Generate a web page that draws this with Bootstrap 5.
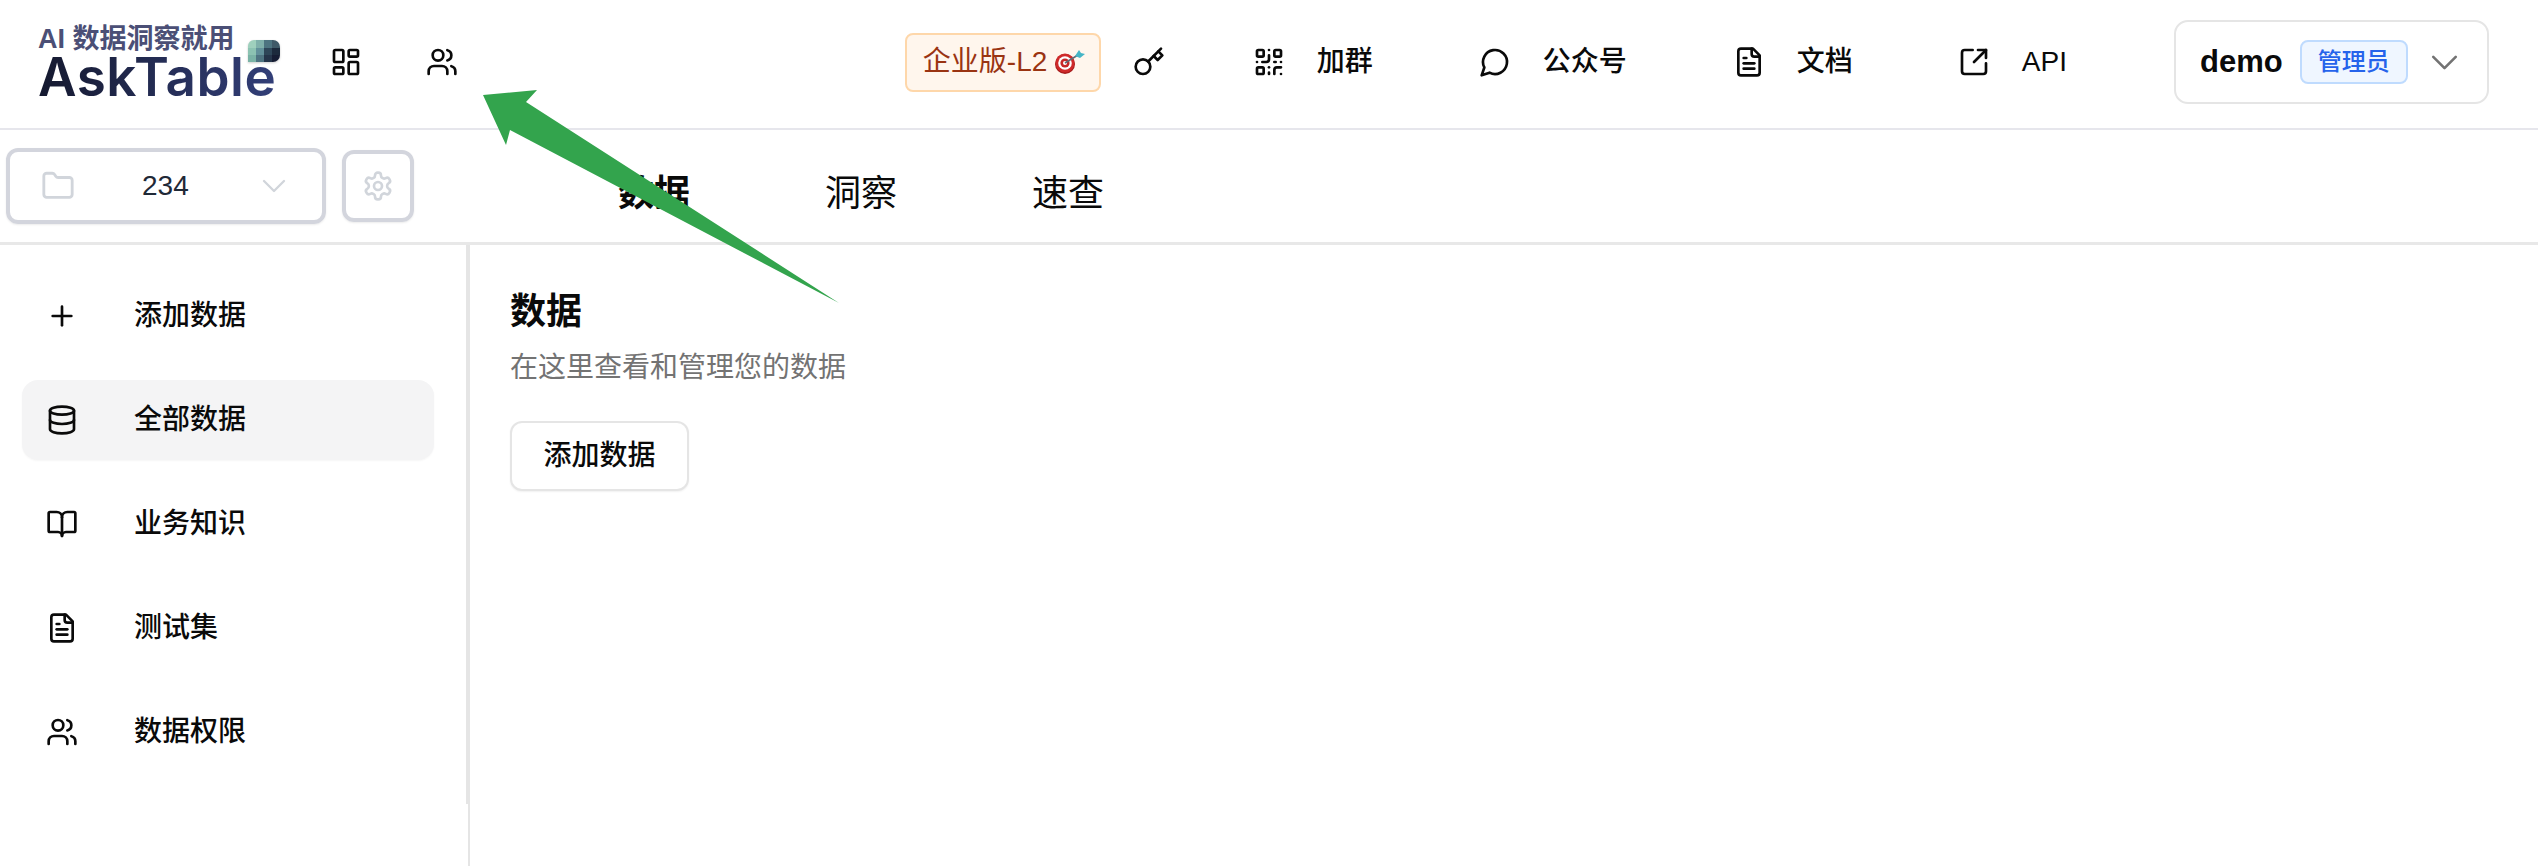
<!DOCTYPE html>
<html lang="zh-CN">
<head>
  <meta charset="UTF-8">
  <meta name="viewport" content="width=device-width, initial-scale=1.0">
  <title>AskTable</title>
  <link rel="stylesheet" href="https://cdn.jsdelivr.net/npm/bootstrap@5.3.0/dist/css/bootstrap.min.css">
  <style>
    html, body { height: 866px; overflow: hidden; }
    body { font-family: "Liberation Sans", "Noto Sans CJK SC", sans-serif; color: #0a0a0a; background: #fff; position: relative; }
    svg.ico { fill: none; stroke: currentColor; stroke-width: 2; stroke-linecap: round; stroke-linejoin: round; flex: none; }
    .top-bar { height: 130px; border-bottom: 2px solid #e6e6ec; padding: 0 49px 4px 0; }
    .brand-box { width: 250px; margin-left: 38px; padding-top: 24px; position: relative; flex: none; }
    .brand-slogan { font-size: 27px; line-height: 30px; font-weight: 700; color: #4b4f76; white-space: nowrap; }
    .brand-name { font-family: Inter, sans-serif; font-size: 53px; line-height: 46px; font-weight: 600; white-space: nowrap; letter-spacing: .5px;
      background: linear-gradient(90deg, #15192f, #34417c); -webkit-background-clip: text; background-clip: text; color: transparent; }
    .brand-mark { position: absolute; left: 210px; top: 40px; filter: drop-shadow(0 1px 1px rgba(0,0,0,.2)); }
    .top-ico-left { margin-left: 42px; gap: 64px; }
    .plan-tag { width: 196px; height: 59px; margin-left: auto; background: #fff6ed; border: 2px solid #fed7aa; border-radius: 8px; color: #9a3412; font-size: 28px; padding-left: 16px; white-space: nowrap; flex: none; }
    .act-item { font-size: 28px; font-weight: 500; color: #0a0a0a; white-space: nowrap; flex: none; margin-left: 32px; }
    .ico-key { margin-left: 32px; }
    .ico-qr { margin-left: 88px; }
    .ico-next { margin-left: 106px; }
    .ico-link { margin-left: 105px; }
    .user-box { width: 315px; height: 84px; margin-left: 107px; border: 2px solid #e5e5e5; border-radius: 14px; padding-left: 24px; flex: none; }
    .user-name { font-size: 31px; font-weight: 700; }
    .role-tag { width: 108px; height: 44px; margin-left: 17px; background: #eff6ff; border: 2px solid #bfdbfe; border-radius: 8px; color: #2563eb; font-size: 24px; font-weight: 500; }
    .user-chev { margin-left: 14px; color: #737373; }
    .user-chev, .ds-chev { stroke-width: 1.4 !important; }
    .sub-bar { height: 115px; border-bottom: 3px solid #e8e8e8; }
    .ds-select { width: 320px; height: 76px; margin-left: 6px; padding-left: 31px; border: 4px solid #d3d5dd; border-radius: 12px; color: #d1d5db; box-shadow: 0 1px 2px rgba(0,0,0,.08); }
    .ds-name { font-size: 28px; color: #1f2937; margin-left: 67px; }
    .ds-chev { margin-left: 65px; }
    .gear-btn { width: 72px; height: 72px; margin-left: 16px; border: 4px solid #d3d5dd; border-radius: 12px; color: #d1d5db; box-shadow: 0 1px 2px rgba(0,0,0,.08); }
    .tab-row { margin-left: 204px; gap: 135px; font-size: 36px; color: #0a0a0a; }
    .page-body { height: 621px; }
    .side-wrap { width: 470px; border-right: 2px solid #e5e5e5; }
    .side-nav { height: 559px; border-right: 2px solid #e5e5e5; padding: 31px 32px 0 22px; }
    .side-link { height: 80px; margin-bottom: 24px; padding-left: 24px; gap: 56px; border-radius: 16px; font-size: 28px; font-weight: 500; color: #0a0a0a; }
    .side-link.is-on { background: #f4f4f5; box-shadow: 0 1px 2px rgba(0,0,0,.04); }
    .main-pane { padding: 43px 0 0 40px; }
    .pane-title { font-size: 36px; line-height: 48px; font-weight: 700; margin: 0; }
    .pane-sub { font-size: 28px; line-height: 40px; color: #737373; margin: 12px 0 33px; }
    .add-btn { width: 179px; height: 70px; background: #fff; border: 2px solid #e5e5e5; border-radius: 12px; font-size: 28px; font-weight: 500; padding: 0; color: #0a0a0a; box-shadow: 0 1px 2px rgba(0,0,0,.06); }
    .note-arrow { position: absolute; left: 0; top: 0; pointer-events: none; }
  </style>
</head>
<body>
<header class="top-bar d-flex align-items-center">
  <div class="brand-box align-self-start">
    <div class="brand-slogan">AI 数据洞察就用</div>
    <div class="brand-name">AskTable</div>
    <svg class="brand-mark" width="32" height="23" viewBox="0 0 32 23">
      <defs><clipPath id="markClip"><path d="M6 0H25A7 7 0 0 1 32 7V15A7 7 0 0 1 25 22H0V6A6 6 0 0 1 6 0Z"/></clipPath></defs>
      <g clip-path="url(#markClip)">
        <rect width="8" height="8" fill="#9fd0bd"/><rect x="8" width="8" height="8" fill="#7fb0aa"/><rect x="16" width="8" height="8" fill="#4d7480"/><rect x="24" width="8" height="8" fill="#3f5a68"/>
        <rect y="8" width="8" height="7" fill="#8cc3b2"/><rect x="8" y="8" width="8" height="7" fill="#62919a"/><rect x="16" y="8" width="8" height="7" fill="#2e4658"/><rect x="24" y="8" width="8" height="7" fill="#1c2a3c"/>
        <rect y="15" width="8" height="7" fill="#7ab3a6"/><rect x="8" y="15" width="8" height="7" fill="#4e7481"/><rect x="16" y="15" width="8" height="7" fill="#25354a"/><rect x="24" y="15" width="8" height="7" fill="#161d33"/>
      </g>
    </svg>
  </div>
  <div class="top-ico-left d-flex align-items-center">
    <svg class="ico" width="32" height="32" viewBox="0 0 24 24"><rect x="3" y="3" width="7" height="9" rx="1"/><rect x="14" y="3" width="7" height="5" rx="1"/><rect x="14" y="12" width="7" height="9" rx="1"/><rect x="3" y="16" width="7" height="5" rx="1"/></svg>
    <svg class="ico" width="32" height="32" viewBox="0 0 24 24"><path d="M16 21v-2a4 4 0 0 0-4-4H6a4 4 0 0 0-4 4v2"/><circle cx="9" cy="7" r="4"/><path d="M22 21v-2a4 4 0 0 0-3-3.87"/><path d="M16 3.13a4 4 0 0 1 0 7.75"/></svg>
  </div>
  <div class="plan-tag d-flex align-items-center">企业版-L2
    <svg class="ms-2" width="30" height="26" viewBox="0 0 30 26">
      <circle cx="10" cy="15" r="10" fill="#a61b1b"/><circle cx="10" cy="14" r="9.5" fill="#cf2a2a"/><circle cx="10" cy="14" r="6.8" fill="#fff"/><circle cx="10" cy="14" r="4.6" fill="#c62828"/><circle cx="10" cy="14" r="2" fill="#fff"/>
      <path d="M10 14 23 6" stroke="#5f6b76" stroke-width="1.6"/><path d="M20 7 24 1 26 4 30 5 25 9Z" fill="#45b5c6"/>
    </svg>
  </div>
  <svg class="ico ico-key" width="32" height="32" viewBox="0 0 24 24"><circle cx="7.5" cy="15.5" r="5.5"/><path d="m21 2-9.6 9.6"/><path d="m15.5 7.5 3 3L22 7l-3-3"/></svg>
  <svg class="ico ico-qr" width="32" height="32" viewBox="0 0 24 24"><rect x="3" y="3" width="5" height="5" rx="1"/><rect x="16" y="3" width="5" height="5" rx="1"/><rect x="3" y="16" width="5" height="5" rx="1"/><path d="M21 16h-3a2 2 0 0 0-2 2v3"/><path d="M21 21v.01"/><path d="M12 7v3a2 2 0 0 1-2 2H7"/><path d="M3 12h.01"/><path d="M12 3h.01"/><path d="M12 16v.01"/><path d="M16 12h1"/><path d="M21 12v.01"/><path d="M12 21v-1"/></svg>
  <span class="act-item">加群</span>
  <svg class="ico ico-next" width="32" height="32" viewBox="0 0 24 24"><path d="M7.9 20A9 9 0 1 0 4 16.1L2 22Z"/></svg>
  <span class="act-item">公众号</span>
  <svg class="ico ico-next" width="32" height="32" viewBox="0 0 24 24"><path d="M15 2H6a2 2 0 0 0-2 2v16a2 2 0 0 0 2 2h12a2 2 0 0 0 2-2V7Z"/><path d="M14 2v4a2 2 0 0 0 2 2h4"/><path d="M10 9H8"/><path d="M16 13H8"/><path d="M16 17H8"/></svg>
  <span class="act-item">文档</span>
  <svg class="ico ico-link" width="32" height="32" viewBox="0 0 24 24"><path d="M21 13v6a2 2 0 0 1-2 2H5a2 2 0 0 1-2-2V5a2 2 0 0 1 2-2h6"/><path d="m21 3-9 9"/><path d="M15 3h6v6"/></svg>
  <span class="act-item">API</span>
  <div class="user-box d-flex align-items-center">
    <span class="user-name">demo</span>
    <span class="role-tag d-flex align-items-center justify-content-center">管理员</span>
    <svg class="ico user-chev" width="45" height="45" viewBox="0 0 24 24"><path d="m6 9 6 6 6-6"/></svg>
  </div>
</header>

<div class="sub-bar d-flex align-items-center">
  <div class="ds-select d-flex align-items-center">
    <svg class="ico" width="34" height="34" viewBox="0 0 24 24"><path d="M20 20a2 2 0 0 0 2-2V8a2 2 0 0 0-2-2h-7.9a2 2 0 0 1-1.69-.9L9.6 3.9A2 2 0 0 0 7.93 3H4a2 2 0 0 0-2 2v13a2 2 0 0 0 2 2Z"/></svg>
    <span class="ds-name">234</span>
    <svg class="ico ds-chev" width="40" height="40" viewBox="0 0 24 24"><path d="m6 9 6 6 6-6"/></svg>
  </div>
  <div class="gear-btn d-flex align-items-center justify-content-center">
    <svg class="ico" width="32" height="32" viewBox="0 0 24 24"><path d="M12.22 2h-.44a2 2 0 0 0-2 2v.18a2 2 0 0 1-1 1.73l-.43.25a2 2 0 0 1-2 0l-.15-.08a2 2 0 0 0-2.73.73l-.22.38a2 2 0 0 0 .73 2.73l.15.1a2 2 0 0 1 1 1.72v.51a2 2 0 0 1-1 1.74l-.15.09a2 2 0 0 0-.73 2.73l.22.38a2 2 0 0 0 2.73.73l.15-.08a2 2 0 0 1 2 0l.43.25a2 2 0 0 1 1 1.73V20a2 2 0 0 0 2 2h.44a2 2 0 0 0 2-2v-.18a2 2 0 0 1 1-1.73l.43-.25a2 2 0 0 1 2 0l.15.08a2 2 0 0 0 2.73-.73l.22-.39a2 2 0 0 0-.73-2.73l-.15-.08a2 2 0 0 1-1-1.74v-.5a2 2 0 0 1 1-1.74l.15-.09a2 2 0 0 0 .73-2.73l-.22-.38a2 2 0 0 0-2.73-.73l-.15.08a2 2 0 0 1-2 0l-.43-.25a2 2 0 0 1-1-1.73V4a2 2 0 0 0-2-2z"/><circle cx="12" cy="12" r="3"/></svg>
  </div>
  <div class="tab-row d-flex pt-3">
    <span class="fw-bold">数据</span>
    <span>洞察</span>
    <span>速查</span>
  </div>
</div>

<div class="page-body d-flex">
  <div class="side-wrap flex-shrink-0">
    <nav class="side-nav">
      <div class="side-link d-flex align-items-center">
        <svg class="ico" width="32" height="32" viewBox="0 0 24 24"><path d="M5 12h14"/><path d="M12 5v14"/></svg>添加数据
      </div>
      <div class="side-link is-on d-flex align-items-center">
        <svg class="ico" width="32" height="32" viewBox="0 0 24 24"><ellipse cx="12" cy="5" rx="9" ry="3"/><path d="M3 5v14a9 3 0 0 0 18 0V5"/><path d="M3 12a9 3 0 0 0 18 0"/></svg>全部数据
      </div>
      <div class="side-link d-flex align-items-center">
        <svg class="ico" width="32" height="32" viewBox="0 0 24 24"><path d="M12 7v14"/><path d="M3 18a1 1 0 0 1-1-1V4a1 1 0 0 1 1-1h5a4 4 0 0 1 4 4 4 4 0 0 1 4-4h5a1 1 0 0 1 1 1v13a1 1 0 0 1-1 1h-6a3 3 0 0 0-3 3 3 3 0 0 0-3-3z"/></svg>业务知识
      </div>
      <div class="side-link d-flex align-items-center">
        <svg class="ico" width="32" height="32" viewBox="0 0 24 24"><path d="M15 2H6a2 2 0 0 0-2 2v16a2 2 0 0 0 2 2h12a2 2 0 0 0 2-2V7Z"/><path d="M14 2v4a2 2 0 0 0 2 2h4"/><path d="M10 9H8"/><path d="M16 13H8"/><path d="M16 17H8"/></svg>测试集
      </div>
      <div class="side-link d-flex align-items-center">
        <svg class="ico" width="32" height="32" viewBox="0 0 24 24"><path d="M16 21v-2a4 4 0 0 0-4-4H6a4 4 0 0 0-4 4v2"/><circle cx="9" cy="7" r="4"/><path d="M22 21v-2a4 4 0 0 0-3-3.87"/><path d="M16 3.13a4 4 0 0 1 0 7.75"/></svg>数据权限
      </div>
    </nav>
  </div>
  <main class="main-pane flex-grow-1">
    <h1 class="pane-title">数据</h1>
    <p class="pane-sub">在这里查看和管理您的数据</p>
    <button class="add-btn btn" type="button">添加数据</button>
  </main>
</div>

<svg class="note-arrow" width="900" height="320" viewBox="0 0 900 320"><polygon points="483,95 537,90 526,102 839,303 510,130 506,145" fill="#33a44d"/></svg>

<script src="https://cdn.jsdelivr.net/npm/bootstrap@5.3.0/dist/js/bootstrap.bundle.min.js"></script>
</body>
</html>
